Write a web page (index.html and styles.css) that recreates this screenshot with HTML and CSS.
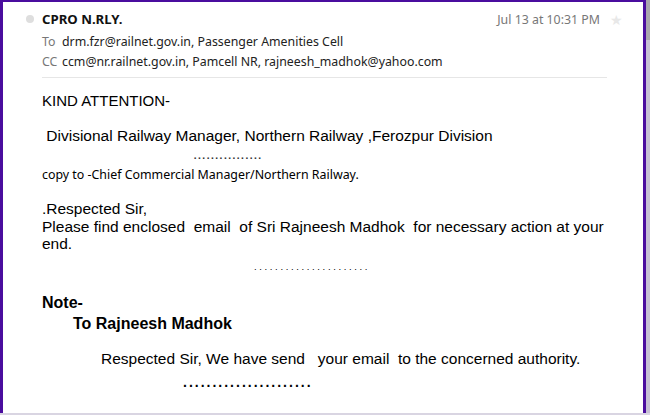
FILE: index.html
```html
<!DOCTYPE html>
<html lang="en">
<head>
    <meta charset="UTF-8">
    <title>CPRO N.RLY. - message</title>
    <link rel="stylesheet" href="styles.css">
</head>
<body>
    <div class="viewer">
        <div class="message">
            <div class="header">
                <div class="from-row">
                    <span class="dot"></span>
                    <span class="sender">CPRO N.RLY.</span>
                    <span class="date">Jul 13 at 10:31 PM</span>
                    <span class="star">&#9733;</span>
                </div>
                <div class="addr-row"><span class="label">To</span>drm.fzr@railnet.gov.in, Passenger Amenities Cell</div>
                <div class="addr-row"><span class="label">CC</span>ccm@nr.railnet.gov.in, Pamcell NR, rajneesh_madhok@yahoo.com</div>
            </div>
            <div class="body">
                <p class="attn">KIND ATTENTION-</p>
                <p class="big division">&nbsp;Divisional Railway Manager, Northern Railway ,Ferozpur Division</p>
                <p class="dots-small">................</p>
                <p class="copy">copy to -Chief Commercial Manager/Northern Railway.</p>
                <p class="big para">.Respected Sir,<br>Please find enclosed &nbsp;email &nbsp;of Sri Rajneesh Madhok &nbsp;for necessary action at your end.</p>
                <p class="dots-mid">. . . . . . . . . . . . . . . . . . . . . .</p>
                <p class="note first">Note-</p>
                <p class="note indent">To Rajneesh Madhok</p>
                <p class="big reply">Respected Sir, We have send &nbsp; your email &nbsp;to the concerned authority.</p>
                <p class="dots-bold">......................</p>
            </div>
        </div>
        <div class="scrollbar"><div class="thumb"></div></div>
    </div>
    <div class="bottom-edge"></div>
</body>
</html>
```

FILE: styles.css
```css
html, body {
    margin: 0;
    padding: 0;
    background: #fff;
}
.viewer {
    display: flex;
    height: 413px;
    overflow: hidden;
}
.message {
    width: 640px;
    border: 3px solid #4a0d9e;
    border-bottom: none;
    border-top-width: 2px;
    overflow: hidden;
}
.scrollbar {
    width: 4px;
    background: #c6c0d4;
}
.thumb {
    height: 40px;
    background: #a9a6ad;
}
.bottom-edge {
    height: 2px;
    background: #d9d5e2;
}

/* header */
.header {
    margin: 0 36px 0 39px;
    padding-top: 7px;
    padding-bottom: 5px;
    border-bottom: 1px solid #e6e6e6;
    font-family: "Noto Sans", sans-serif;
    font-size: 12.35px;
    color: #222;
}
.from-row {
    display: flex;
    align-items: center;
    height: 20px;
    margin-left: -16px;
    margin-bottom: 3px;
}
.dot {
    width: 8px;
    height: 8px;
    border-radius: 50%;
    background: #dedede;
    margin-right: 8px;
}
.sender {
    font-weight: bold;
    font-size: 13.2px;
    color: #111;
}
.date {
    margin-left: auto;
    color: #777;
}
.star {
    color: #e8e8e8;
    font-size: 14px;
    margin-left: 10px;
    margin-right: -16px;
}
.addr-row {
    height: 20px;
    line-height: 20px;
}
.label {
    color: #777;
    display: inline-block;
    width: 20px;
}

/* body */
.body {
    padding: 14px 39px 0 39px;
    font-family: "Liberation Sans", Arial, sans-serif;
    color: #000;
}
.body p {
    margin: 0;
}
.attn {
    font-size: 15px;
    line-height: 18px;
}
.big {
    font-size: 15.5px;
    line-height: 17.5px;
}
.division {
    margin-top: 17px !important;
    line-height: 18px;
}
.dots-small {
    font-size: 15.5px;
    line-height: 12px;
    padding-left: 151px;
    margin-top: 3px !important;
    color: #333;
}
.copy {
    font-family: "Noto Sans", sans-serif;
    font-size: 12.4px;
    line-height: 16px;
    margin-top: 7px !important;
}
.para {
    margin-top: 17px !important;
}
.dots-mid {
    font-size: 9.5px;
    line-height: 14px;
    padding-left: 212px;
    margin-top: 7.5px !important;
}
.note {
    font-size: 16px;
    line-height: 21px;
    font-weight: bold;
}
.first {
    margin-top: 17.5px !important;
}
.indent {
    padding-left: 31px;
}
.reply {
    line-height: 18px;
    padding-left: 59px;
    margin-top: 16.5px !important;
}
.dots-bold {
    font-size: 14px;
    font-weight: bold;
    letter-spacing: 2px;
    line-height: 18px;
    padding-left: 141px;
    margin-top: 5px !important;
}
```
